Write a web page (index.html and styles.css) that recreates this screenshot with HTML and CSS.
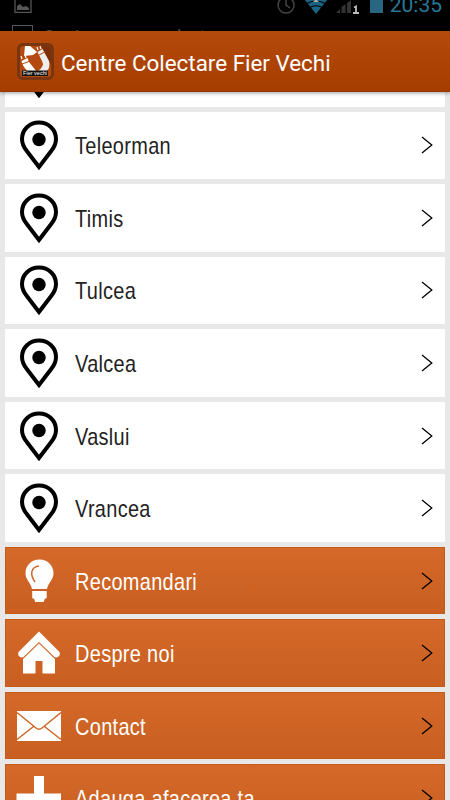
FILE: index.html
```html
<!DOCTYPE html>
<html lang="ro">
<head>
    <meta charset="UTF-8">
    <meta name="viewport" content="width=device-width, initial-scale=1.0">
    <title>Centre Colectare Fier Vechi</title>
    <link rel="stylesheet" href="styles.css">
</head>
<body>
    <!-- Shapes shared by the rows -->
    <svg class="defs">
        <symbol id="pin" viewBox="0 0 40 50">
            <path d="M20 2.5C10.500 2.500 3 9.700 3 19c0 5.500 2.300 9 5 12.300L20 47l12-15.700c2.700-3.300 5-6.800 5-12.300C37 9.700 29.500 2.500 20 2.500z" fill="none" stroke="#000" stroke-width="4"/>
            <circle cx="20" cy="19.500" r="6.700"/>
        </symbol>
        <symbol id="arrow" viewBox="0 0 12 18">
            <path d="M1 1l9.800 8L1 17" fill="none" stroke="#000" stroke-width="1.300"/>
        </symbol>
    </svg>

    <div class="screen">
        <div class="status-bar">
            <div class="status-icons">
                <svg class="picture-icon" width="18" height="14" viewBox="0 0 18 14">
                    <path d="M1 0v12.300h16V0" fill="none" stroke="#555" stroke-width="1.300"/>
                    <path d="M3 10V6l3-2 3 3 3-1 3 2v2z" fill="#555"/>
                </svg>
                <svg class="system-icons" width="112" height="15" viewBox="0 0 112 15">
                    <g fill="none" stroke="#444" stroke-width="1.500">
                        <circle cx="10" cy="5" r="8"/>
                        <path d="M10 0v5l4 3"/>
                    </g>
                    <path d="M29 0h22L40 14z" fill="#1c6483"/>
                    <path d="M30 4q10-6 20 0M33 8q7-4.500 14 0" fill="none" stroke="#000" stroke-width="1.200"/>
                    <path d="M37 2l3-3 3 3z" fill="#aaa"/>
                    <path d="M60 13l4-4v4zM65.500 13V7l4-3v9zM71 3l4-3v13h-4z" fill="#333"/>
                    <path d="M78 7.500l2-1v6.500M77 13h6" fill="none" stroke="#bbb" stroke-width="1.800"/>
                    <path d="M94 0h13v13H94z" fill="#296681"/>
                </svg>
                <span class="clock">20:35</span>
            </div>
            <div class="notice">
                <span class="notice-box"></span>
                <span class="notice-text">Copiere ecran salvata</span>
            </div>
        </div>

        <header class="header">
            <svg class="logo" width="37" height="37" viewBox="0 0 37 37">
                <rect width="37" height="37" rx="6" fill="#79350f"/>
                <rect x="3" y="3" width="31" height="31" rx="3" fill="#b44a10"/>
                <path d="M24 3h7q3 0 3 3v16z" fill="#7c3008"/>
                <path d="M8 3l5 0 7 6-4 3-9 1z" fill="#fff"/>
                <path d="M4.500 18l6-3 1.500 4 8 10h-8q-6-4-7.500-11z" fill="#fff"/>
                <path d="M20.500 9l5-3 6.500 12q2 7-4 12l-7-2q7-5 4-10z" fill="#eee"/>
                <path d="M5 21l8-3M22 12l6-3" stroke="#b44a10" stroke-width="1"/>
                <path d="M4 13l1 3M8 12l1 3M20 4l1 3M23 3l1 3" stroke="#fff" stroke-width="1.200"/>
                <rect x="5" y="27.500" width="26" height="5.500" fill="#111"/>
                <text class="logo-text" x="18" y="32" text-anchor="middle">Fier vechi</text>
            </svg>
            <h1>Centre Colectare Fier Vechi</h1>
        </header>

        <main class="list">
            <div class="row">
                <svg class="pin"><use href="#pin"/></svg>
            </div>
            <div class="row">
                <svg class="pin"><use href="#pin"/></svg>
                <span class="label">Teleorman</span>
                <svg class="arrow"><use href="#arrow"/></svg>
            </div>
            <div class="row">
                <svg class="pin"><use href="#pin"/></svg>
                <span class="label">Timis</span>
                <svg class="arrow"><use href="#arrow"/></svg>
            </div>
            <div class="row">
                <svg class="pin"><use href="#pin"/></svg>
                <span class="label">Tulcea</span>
                <svg class="arrow"><use href="#arrow"/></svg>
            </div>
            <div class="row">
                <svg class="pin"><use href="#pin"/></svg>
                <span class="label">Valcea</span>
                <svg class="arrow"><use href="#arrow"/></svg>
            </div>
            <div class="row">
                <svg class="pin"><use href="#pin"/></svg>
                <span class="label">Vaslui</span>
                <svg class="arrow"><use href="#arrow"/></svg>
            </div>
            <div class="row">
                <svg class="pin"><use href="#pin"/></svg>
                <span class="label">Vrancea</span>
                <svg class="arrow"><use href="#arrow"/></svg>
            </div>
            <div class="row menu-row">
                <svg class="menu-icon" viewBox="0 0 46 46">
                    <path d="M23.500 1.500c-8 0-14 6-14 13.500 0 7 5 9 6.500 16h15c1.500-7 6.500-9 6.500-16C37.500 7.500 31.500 1.500 23.500 1.500zM16.200 33h14.500v7l-2 1-1 3h-8.500l-1-3-2-1z" fill="#fff"/>
                    <path d="M23 8c-8 1-9.500 8-4 16" fill="none" stroke="#cf6626" stroke-width="1.500"/>
                </svg>
                <span class="label">Recomandari</span>
                <svg class="arrow"><use href="#arrow"/></svg>
            </div>
            <div class="row menu-row">
                <svg class="menu-icon" viewBox="0 0 46 46">
                    <path d="M23 1.500l20.500 20.500q1 3-1 4.500t-4 .5L23 12 7.500 27q-2 1-4-.5t-1-4.500z" fill="#fff"/>
                    <path d="M23 13.500l16 15.500v14.500H26.500V31h-7v12.500H7V29z" fill="#fff"/>
                </svg>
                <span class="label">Despre noi</span>
                <svg class="arrow"><use href="#arrow"/></svg>
            </div>
            <div class="row menu-row">
                <svg class="menu-icon" viewBox="0 0 46 46">
                    <path d="M1 8h44v30H1z" fill="#fff"/>
                    <path d="M1 9.500l19 15.500q3 2.500 6 0l19-15.500M1 36.500l16.500-13M45 36.500l-16.500-13" fill="none" stroke="#cf6626" stroke-width="1.500"/>
                </svg>
                <span class="label">Contact</span>
                <svg class="arrow"><use href="#arrow"/></svg>
            </div>
            <div class="row menu-row">
                <svg class="menu-icon" viewBox="0 0 46 46">
                    <path d="M18 1h10v17.500h17v10H28V45H18V28.500H.500v-10H18z" fill="#fff"/>
                </svg>
                <span class="label">Adauga afacerea ta</span>
                <svg class="arrow"><use href="#arrow"/></svg>
            </div>
        </main>
    </div>
</body>
</html>
```

FILE: styles.css
```css
* {
    box-sizing: border-box;
}
body {
    margin: 0;
    background-color: #e8e8e8;
    font-family: "Liberation Sans", Arial, sans-serif;
}
.defs {
    display: none;
}
.screen {
    display: flex;
    flex-direction: column;
    width: 450px;
    height: 800px;
    overflow: hidden;
}
.status-bar {
    height: 31px;
    flex: none;
    overflow: hidden;
    background-color: #000;
    font-family: Roboto, sans-serif;
}
.status-icons {
    display: flex;
    align-items: flex-start;
    height: 23px;
    padding: 0 8px 0 14px;
}
.system-icons {
    margin-left: auto;
    margin-right: 2px;
}
.clock {
    margin-top: -7px;
    font-size: 21px;
    line-height: 24px;
    color: #287795;
}
.notice {
    display: flex;
    gap: 10px;
    padding: 2px 12px;
}
.notice-box {
    width: 21px;
    height: 20px;
    border: 1px solid #555;
}
.notice-text {
    font-size: 18px;
    line-height: 24px;
    color: #555;
}
.header {
    display: flex;
    align-items: center;
    flex: none;
    height: 61px;
    padding: 1px 17px 0;
    gap: 7px;
    background: linear-gradient(#b44b0c, #a63d00);
    border-bottom: 1px solid #963700;
    box-shadow: 0 1px 4px rgba(0, 0, 0, 0.4);
    z-index: 1;
}
.header h1 {
    margin: 0;
    padding-top: 2px;
    font-family: Roboto, sans-serif;
    font-size: 22.400px;
    font-weight: 400;
    color: #fff;
    white-space: nowrap;
}
.logo-text {
    font-size: 5.500px;
    fill: #fff;
}
.list {
    display: flex;
    flex-direction: column;
    flex: 1;
    gap: 5px;
    min-height: 0;
    padding: 0 5px;
    overflow: hidden;
}
.row {
    display: flex;
    align-items: center;
    flex: none;
    height: 67.550px;
    padding: 0 12px 0 11px;
    background-color: #fff;
    color: #222;
}
.row:first-child {
    margin-top: -53px;
}
.pin {
    width: 46px;
    height: 50px;
}
.menu-icon {
    width: 46px;
    height: 46px;
}
/* Condensed lettering */
.label {
    margin-left: 13px;
    padding-top: 2px;
    font-size: 24px;
    letter-spacing: 0.400px;
    transform: scaleX(0.830);
    transform-origin: left;
    white-space: nowrap;
}
.arrow {
    width: 12px;
    height: 18px;
    margin-left: auto;
}
.menu-row {
    background: linear-gradient(#d4692a, #c85e1f);
    border: 1px solid #c65a1a;
    padding: 0 11px 0 10px;
    color: #fff;
}
```
